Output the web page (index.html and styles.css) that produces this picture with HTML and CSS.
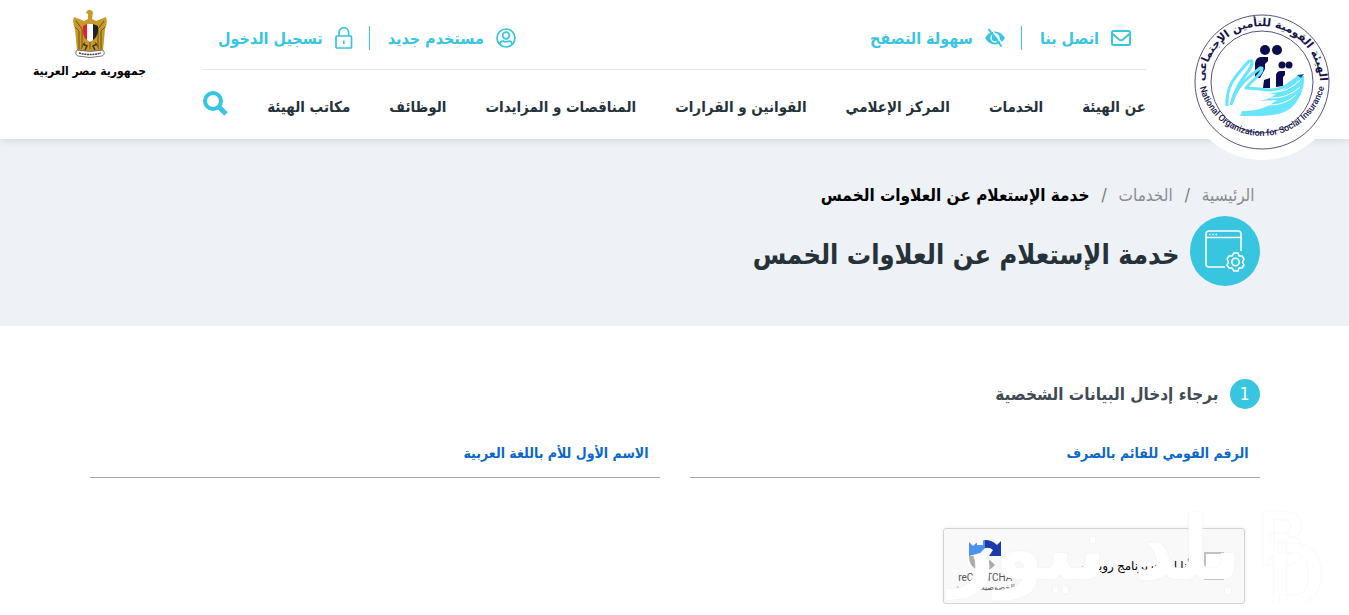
FILE: index.html
```html
<!doctype html>
<html lang="ar" dir="rtl">
  <head>
    <meta charset="utf-8">
    <meta name="viewport" content="width=device-width, initial-scale=1">
    <title>خدمة الإستعلام عن العلاوات الخمس</title>
    <link rel="stylesheet" href="styles.css">
  </head>
  <body>
    <header class="header">
      <a href="#" class="logo" aria-label="الهيئة القومية للتأمين الإجتماعي">
        <svg viewBox="0 0 156 156" width="156" height="156">
          <defs>
            <path id="arc-top" d="M20.300 86 A58 58 0 1 1 135.700 86"/>
            <path id="arc-bottom" d="M14 68 A64 64 0 1 0 142 68"/>
          </defs>
          <circle cx="78" cy="78" r="78" fill="#fff"/>
          <circle cx="78" cy="78" r="67" fill="none" stroke="#55537b" stroke-width="1"/>
          <circle cx="78" cy="78" r="51" fill="none" stroke="#55537b" stroke-width="1"/>
          <text class="logo-ar" direction="rtl" text-anchor="middle"><textPath href="#arc-top" startOffset="50%">الهيئة القومية للتأمين الإجتماعى</textPath></text>
          <text class="logo-en" direction="ltr" text-anchor="middle"><textPath href="#arc-bottom" startOffset="50%">National Organization for Social Insurance</textPath></text>
          <g fill="#0b0b4f">
            <circle cx="81" cy="46" r="5"/>
            <circle cx="93" cy="46" r="5"/>
            <circle cx="98" cy="61" r="3.500"/>
            <circle cx="105" cy="61" r="3.500"/>
            <path d="M71 65 V59 Q72 53 77 53 H84 V57 L81 60 V65 L76 74 H71Z"/>
            <path d="M80 76 L86 74 V84 H79Z"/>
            <path d="M92 83 V72 Q92 67 97 67 H101 V71 L99 73 V82Z"/>
          </g>
          <g fill="none" stroke="#68e5fb" stroke-width="3" stroke-linejoin="round">
            <path d="M43 102 C42 80 52 72 65 57 L68 57 C70 66 53 74 47 101"/>
            <path d="M48 98 C54 80 64 74 76 64 L78 64 C79 70 68 76 62 84 L76 85 Q90 88 102 82 L116 72"/>
          </g>
          <path d="M114 71 L120 72 C121 86 113 103 100 108 C88 113 70 112 56 112 L58 107 C74 107 85 103 93 96 L76 97 Q86 95 92 90 L80 89 Q101 91 114 71Z" fill="#68e5fb"/>
          <path d="M88 88 Q104 89 117 75 M86 94 Q103 95 116 83 M86 101 Q101 101 112 91" fill="none" stroke="#fff" stroke-width="1"/>
          <path d="M113 71 L120 70 L117 74Z" fill="#1457a8"/>
        </svg>
      </a>

      <div class="header-main">
        <div class="top-bar">
          <div class="top-links">
            <a href="#">
              <svg width="20" height="16" viewBox="0 0 20 16" fill="none" stroke="currentColor" stroke-width="2"><rect x="1" y="1" width="18" height="14" rx="1.500"/><path d="M1 3.500 L8 9.500 Q10 11 12 9.500 L19 3.500"/></svg>
              اتصل بنا
            </a>
            <a href="#">
              <svg width="20" height="20" viewBox="0 0 20 20"><path d="M0 10 Q4 3.500 10 3.500 T20 10 Q16 16.500 10 16.500 T0 10Z" fill="currentColor"/><circle cx="10" cy="10" r="4" fill="none" stroke="#fff" stroke-width="1.500"/><path d="M10 7 A3 3 0 0 1 13 10" fill="none" stroke="#fff"/><path d="M5.500 0 L18.500 17.500" stroke="#fff" stroke-width="1.500"/><path d="M3.500 1 L16.500 18.500" stroke="currentColor" stroke-width="2"/></svg>
              سهولة التصفح
            </a>
          </div>
          <div class="top-links">
            <a href="#">
              <svg width="20" height="20" viewBox="0 0 20 20" fill="none" stroke="currentColor" stroke-width="1.700"><circle cx="10" cy="10" r="9"/><circle cx="10" cy="7.500" r="3.300"/><path d="M4 16.500 Q4 13 7 13 Q10 14.500 13 13 Q16 13 16 16.500"/></svg>
              مستخدم جديد
            </a>
            <a href="#">
              <svg width="18" height="22" viewBox="0 0 18 22" fill="none" stroke="currentColor" stroke-width="1.700"><rect x="1" y="9" width="15.500" height="12" rx="1"/><path d="M4 9 V5.500 A4.800 4.800 0 0 1 13.600 5.500 V9 M8.800 13.500 V17"/></svg>
              تسجيل الدخول
            </a>
          </div>
        </div>
        <nav class="nav">
          <a href="#">عن الهيئة</a>
          <a href="#">الخدمات</a>
          <a href="#">المركز الإعلامي</a>
          <a href="#">القوانين و القرارات</a>
          <a href="#">المناقصات و المزايدات</a>
          <a href="#">الوظائف</a>
          <a href="#">مكاتب الهيئة</a>
          <button type="button" class="search" aria-label="بحث">
            <svg width="25" height="25" viewBox="0 0 25 25" fill="none" stroke="currentColor"><circle cx="10" cy="10" r="8" stroke-width="4"/><path d="M16 16 L23 23" stroke-width="5"/></svg>
          </button>
        </nav>
      </div>

      <div class="country">
        <svg width="36" height="50" viewBox="0 0 36 50">
          <path d="M15 2 Q18 -1 21 3 L20 10 L24 12 L34 8 Q36 13 33 20 L31 42 H28 L25 36 L28 42 L8 42 L11 36 L8 42 L5 42 L3 20 Q0 13 2 8 L12 12 L16 10 L16 5 L14 4Z" fill="#c79a29"/>
          <path d="M4 12 L10 20 V38 M3 18 L7 22 V40 M32 12 L26 20 V38 M33 18 L29 22 V40 M13 33 L9 40 M18 32 V40 M23 33 L27 40" fill="none" stroke="#6d5319" stroke-width="1"/>
          <path d="M11 17 L15 15 V31 Q11 28 11 23Z" fill="#e31e2d"/>
          <path d="M15 15 H21 V31 L18 33 L15 31Z" fill="#fff"/>
          <path d="M21 15 L26 17 V23 Q25 28 21 31Z" fill="#222"/>
          <path d="M11 35 L15 37 L13 41 M25 35 L21 37 L23 41" fill="none" stroke="#3c321c" stroke-width="1.500"/>
          <path d="M5 41 Q18 44 31 41 Q34 45 30 47 Q18 50 6 47 Q2 45 5 41Z" fill="#fff" stroke="#555" stroke-width=".8"/>
          <path d="M7 44 Q18 47 29 44" fill="none" stroke="#444" stroke-width="1.500" stroke-dasharray="2 .7"/>
        </svg>
        <span>جمهورية مصر العربية</span>
      </div>
    </header>

    <section class="hero">
      <div class="container">
        <ol class="breadcrumb">
          <li><a href="#">الرئيسية</a></li>
          <li><a href="#">الخدمات</a></li>
          <li class="active">خدمة الإستعلام عن العلاوات الخمس</li>
        </ol>
        <div class="page-title">
          <span class="page-icon">
            <svg width="40" height="42" viewBox="0 0 40 42" fill="none" stroke="#fff" stroke-width="1.600">
              <path d="M20 37 H4 Q1 37 1 34 V4 Q1 1 4 1 H33 Q36 1 36 4 V21 M1 7.500 H36"/>
              <path d="M4 4.500 H13" stroke-dasharray="1.500 1.700"/>
              <path d="M29 23 L33 23 L34 26 L37 26 L39 29 L37.500 32 L39 35 L37 38 L34 38 L33 41 L29 41 L27 38 L24 38 L22 35 L23.500 32 L22 29 L24 26 L27 26Z" stroke-linejoin="round"/>
              <circle cx="30.500" cy="32" r="3.700"/>
            </svg>
          </span>
          <h1>خدمة الإستعلام عن العلاوات الخمس</h1>
        </div>
      </div>
    </section>

    <main class="container">
      <form class="inquiry">
        <h2><span class="step">1</span>برجاء إدخال البيانات الشخصية</h2>
        <div class="fields">
          <div class="field">
            <input type="text" id="national-id">
            <label for="national-id">الرقم القومي للقائم بالصرف</label>
          </div>
          <div class="field">
            <input type="text" id="mother-name">
            <label for="mother-name">الاسم الأول للأم باللغة العربية</label>
          </div>
        </div>
        <div class="captcha">
          <input type="checkbox" id="robot">
          <label for="robot">أنا لست برنامج روبوت</label>
          <div class="captcha-brand">
            <svg width="32" height="32" viewBox="0 0 32 32">
              <path d="M0 16 V2 L4 6 Q9 0 16 0 V8 L11 13Z" fill="#4a90f5"/>
              <path d="M16 0 Q23 0 28 5 L32 1 V16 H20 L24 10 Q21 7 16 8Z" fill="#1c3aa9"/>
              <path d="M0 16 H8 Q9 24 16 24 L21 20 L26 25 Q16 36 4 27 Q0 23 0 16Z" fill="#ababab"/>
            </svg>
            <span class="captcha-name">reCAPTCHA</span>
            <span class="captcha-terms">الخصوصية - البنود</span>
          </div>
          <!-- news mark over the widget -->
          <div class="mark" aria-hidden="true">
            <svg width="76" height="106" viewBox="0 0 76 106">
              <text x="4" y="62">B</text>
              <text class="mark-d" x="14" y="102">D</text>
            </svg>
            <span>بلد نيوز</span>
          </div>
        </div>
      </form>
    </main>
  </body>
</html>
```
FILE: styles.css
```css
* {
    box-sizing: border-box;
}
body {
    margin: 0;
    font: 16px "DejaVu Sans Condensed", "DejaVu Sans", sans-serif;
    color: #26323a;
    background: #fff;
    overflow-x: hidden;
}
a {
    color: inherit;
    text-decoration: none;
}
svg {
    display: block;
    flex: none;
}
.container {
    max-width: 1170px;
    margin: 0 auto;
}

/* header */
.header {
    position: relative;
    display: flex;
    height: 139px;
    padding: 0 9px 0 32px;
    background: #fff;
    box-shadow: 0 1px 8px rgba(0, 0, 0, .12);
}
.logo {
    flex: none;
    height: 160px;
    padding-top: 4px;
}
.logo-ar {
    font: bold 11px "DejaVu Sans", sans-serif;
    fill: #16144a;
}
.logo-en {
    font: 500 9px Roboto, sans-serif;
    fill: #16144a;
}
.header-main {
    flex: 1;
    margin: 0 38px 0 56px;
}
.top-bar {
    display: flex;
    justify-content: space-between;
    height: 70px;
    padding: 26px 15px 0;
    border-bottom: 1px solid #e2e4e6;
}
.top-links {
    display: flex;
    height: 24px;
    color: #38c5e0;
    font-weight: bold;
}
.top-links a {
    display: flex;
    align-items: center;
    gap: 12px;
    white-space: nowrap;
}
.top-links a + a {
    margin-right: 18px;
    padding-right: 16px;
    border-right: 1px solid #38c5e0;
}
.nav {
    display: flex;
    justify-content: space-between;
    align-items: center;
    height: 68px;
    padding-top: 6px;
    font-size: 15px;
    font-weight: bold;
    white-space: nowrap;
}
.search {
    padding: 0 0 8px;
    border: 0;
    background: none;
    color: #38c5e0;
}
.country {
    display: flex;
    flex: none;
    flex-direction: column;
    align-items: center;
    width: 115px;
    padding-top: 9px;
    color: #000;
    font-size: 12px;
    font-weight: bold;
    white-space: nowrap;
}
.country span {
    line-height: 24px;
}

/* title */
.hero {
    height: 187px;
    padding-top: 44px;
    background: #eef1f5;
}
.breadcrumb {
    display: flex;
    margin: 0;
    padding: 0 5px;
    list-style: none;
    font-size: 17px;
    line-height: 24px;
    color: #8a8d90;
}
.breadcrumb li + li::before {
    content: "/";
    padding: 0 12px;
    color: #777;
    font-weight: normal;
}
.breadcrumb .active {
    color: #000;
    font-weight: bold;
}
.page-title {
    display: flex;
    align-items: center;
    gap: 10px;
    margin-top: 9px;
}
.page-icon {
    display: flex;
    align-items: center;
    justify-content: center;
    width: 70px;
    height: 70px;
    border-radius: 50%;
    background: #38c5e0;
}
.page-title h1 {
    margin: 0;
    padding-top: 6px;
    font-size: 27px;
}

/* form */
.inquiry h2 {
    display: flex;
    align-items: center;
    gap: 11px;
    margin: 53px 0 0;
    color: #434a54;
    font-size: 17px;
    line-height: 30px;
}
.step {
    width: 30px;
    border-radius: 50%;
    background: #38c5e0;
    color: #fff;
    font-weight: normal;
    text-align: center;
}
.fields {
    display: flex;
    gap: 30px;
    margin-top: 29px;
}
.field {
    position: relative;
    flex: 1;
}
.field input {
    display: block;
    width: 100%;
    height: 40px;
    padding: 0 11px;
    border: 0;
    border-bottom: 1px solid #a9a9a9;
    background: none;
    font: inherit;
}
.field label {
    position: absolute;
    top: 4px;
    right: 11px;
    color: #0b67cb;
    font-size: 14px;
    font-weight: bold;
    line-height: 22px;
}
.captcha {
    position: relative;
    display: flex;
    align-items: center;
    width: 302px;
    height: 76px;
    margin: 50px 15px 0 0;
    padding: 0 20px 0 12px;
    border: 1px solid #d3d3d3;
    border-radius: 3px;
    background: #f9f9f9;
    box-shadow: 0 0 4px rgba(0, 0, 0, .08);
    color: #000;
}
.captcha input {
    appearance: none;
    width: 20px;
    height: 28px;
    margin: 0;
    border: 2px solid #c1c1c1;
    background: #fff;
}
.captcha label {
    margin-right: 13px;
    font: 12px "Liberation Serif", "DejaVu Sans", serif;
}
.captcha-brand {
    display: flex;
    flex-direction: column;
    align-items: center;
    margin-right: auto;
    color: #555;
    font: 10px Roboto, sans-serif;
    white-space: nowrap;
}
.captcha-terms {
    font: 8px "DejaVu Sans", sans-serif;
}
.mark {
    position: absolute;
    top: -26px;
    right: -86px;
    display: flex;
    gap: 12px;
    pointer-events: none;
}
.mark svg {
    overflow: visible;
}
.mark svg text {
    direction: ltr;
    fill: #fff;
    stroke: #f9f9f9;
    font: bold 76px Roboto, sans-serif;
}
.mark svg .mark-d {
    font-size: 88px;
}
.mark span {
    color: #fff;
    font: bold 88px/92px "DejaVu Sans Condensed", "DejaVu Sans", sans-serif;
    text-shadow: 0 0 1px #ddd;
    white-space: nowrap;
}
```
